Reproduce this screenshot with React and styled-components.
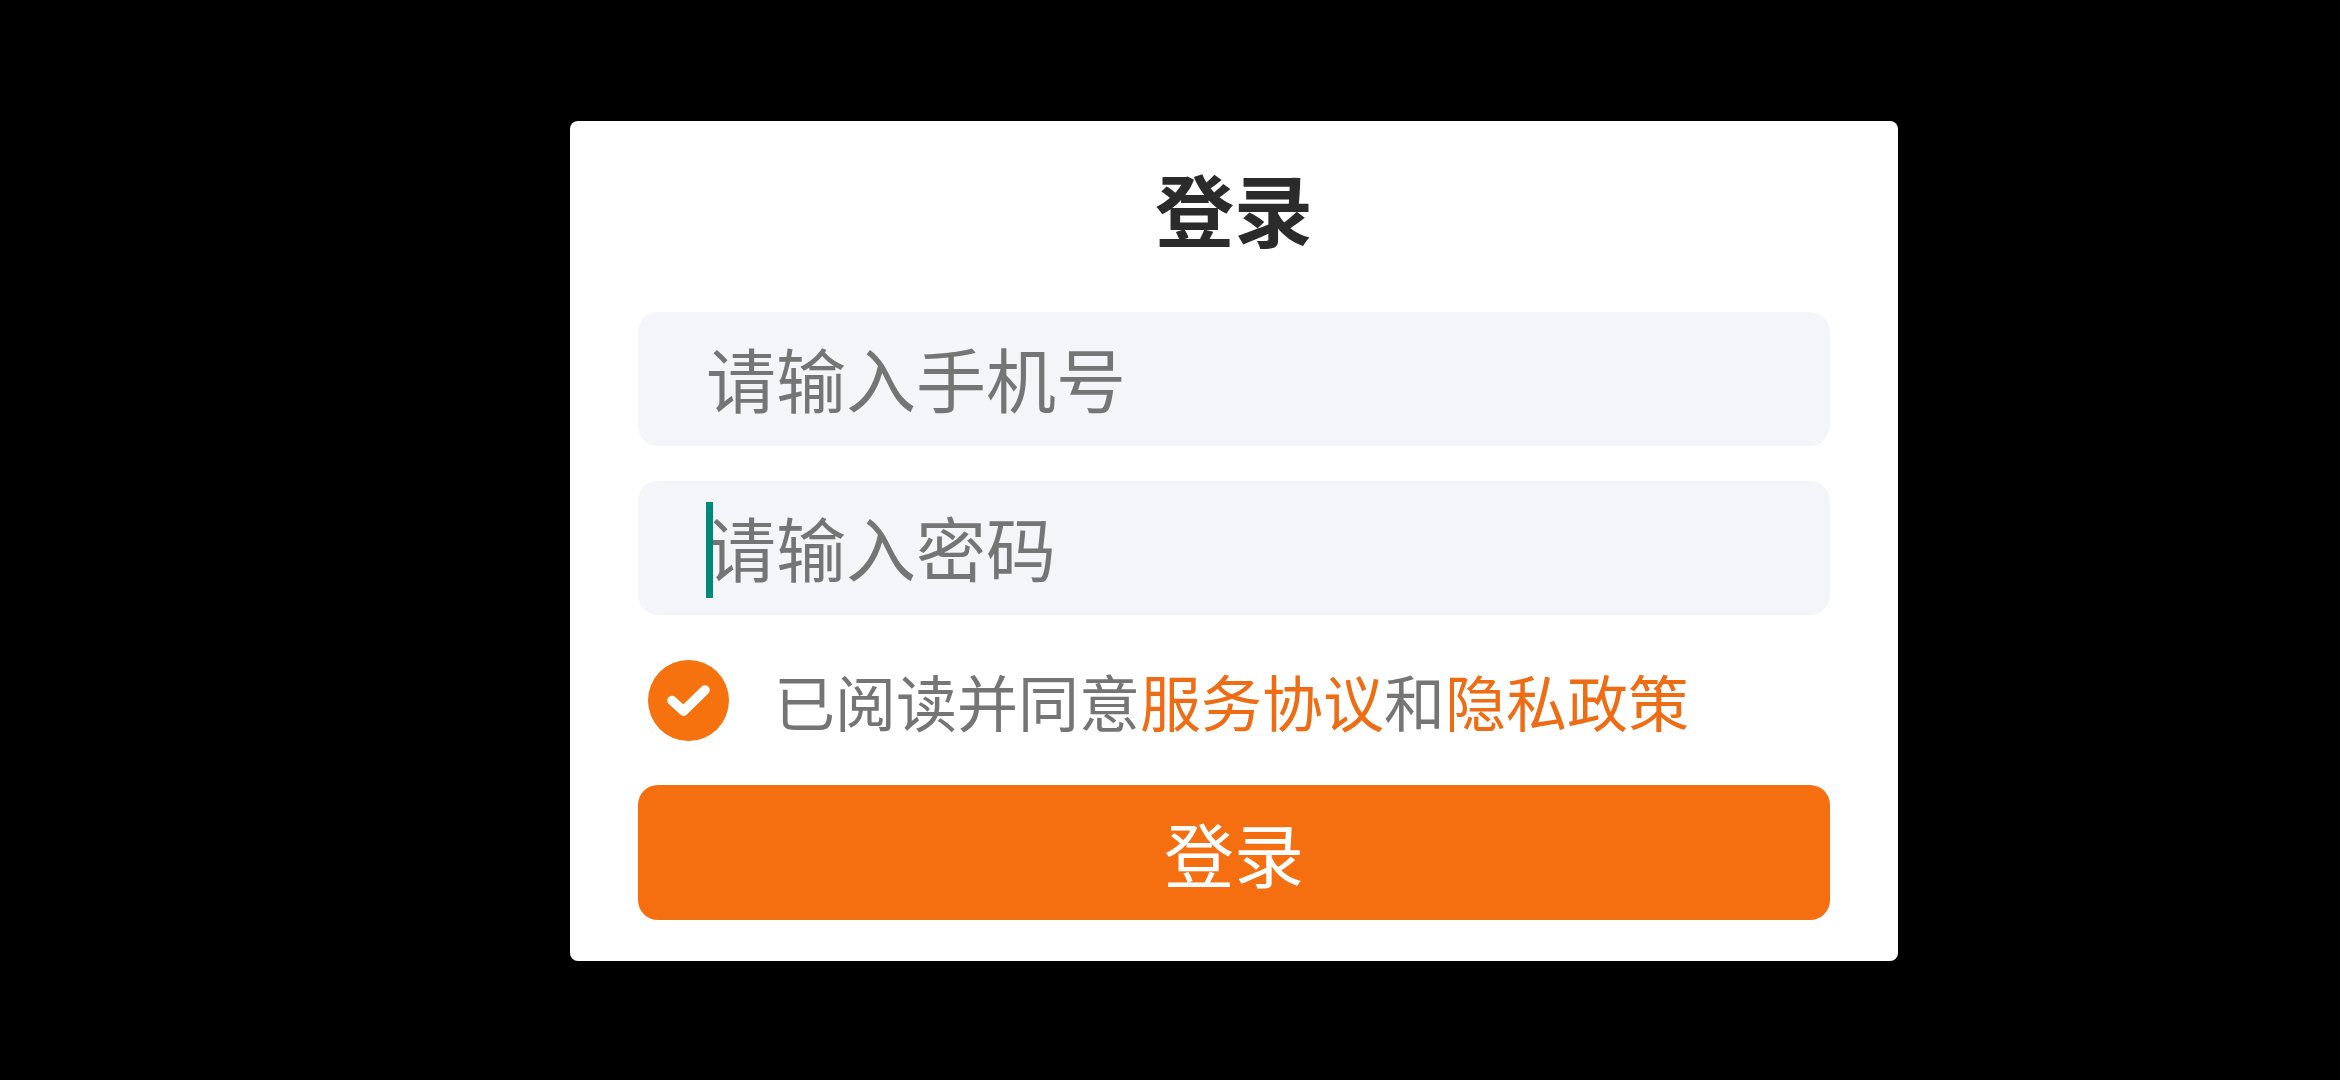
import React from "react";
import styled, { createGlobalStyle } from "styled-components";

const Global = createGlobalStyle`
  html, body { margin: 0; padding: 0; background: #000; }
  body { font-family: "Noto Sans CJK SC", "Noto Sans", sans-serif; }
`;

const Screen = styled.div`
  width: 2340px;
  height: 1080px;
  background: #000;
  display: flex;
  align-items: flex-start;
  justify-content: flex-start;
  padding: 121px 0 0 570px;
  box-sizing: border-box;
  overflow: hidden;
`;

const Card = styled.div`
  width: 1328px;
  height: 840px;
  box-sizing: border-box;
  background: #fff;
  border-radius: 8px;
  padding: 0 68px;
  display: flex;
  flex-direction: column;
`;

const Title = styled.h1`
  margin: 0;
  height: 191px;
  padding-top: 25px;
  box-sizing: border-box;
  font-size: 79px;
  line-height: 124px;
  font-weight: 700;
  color: #2b2b2b;
  text-align: center;
`;

const Field = styled.div`
  position: relative;
  height: 134px;
  margin-bottom: ${(p) => p.$gap}px;
  background: #f4f5f8;
  border-radius: 20px;
  padding: 0 0 3px 68px;
  box-sizing: border-box;
  display: flex;
  align-items: center;
  font-size: 70px;
  color: #757575;
`;

const Caret = styled.span`
  position: absolute;
  left: 68px;
  top: 21px;
  width: 7px;
  height: 96px;
  background: #00897b;
`;

const Agree = styled.div`
  height: 170px;
  display: flex;
  align-items: center;
  padding: 0 0 0 10px;
  font-size: 61px;
  color: #757575;
`;

const Check = styled.span`
  width: 81px;
  height: 81px;
  margin-right: 45px;
  flex: none;
  display: block;
`;

const Link = styled.span`
  color: #ee6c14;
`;

const Submit = styled.button`
  height: 135px;
  border: 0;
  border-radius: 20px;
  background: #f56e0f;
  color: #fff;
  font-family: inherit;
  font-size: 70px;
  padding: 0;
`;

export default function App() {
  return (
    <Screen>
      <Global />
      <Card>
        <Title>登录</Title>
        <Field $gap={35}>请输入手机号</Field>
        <Field $gap={0}>
          <Caret />
          请输入密码
        </Field>
        <Agree>
          <Check>
            <svg width="81" height="81" viewBox="0 0 81 81">
              <circle cx="40.5" cy="40.5" r="40.5" fill="#f5720f" />
              <path d="M24 40.5 L35.5 51 L57 30" fill="none" stroke="#fff" strokeWidth="9.5" strokeLinecap="round" strokeLinejoin="round" />
            </svg>
          </Check>
          <span>
            已阅读并同意<Link>服务协议</Link>和<Link>隐私政策</Link>
          </span>
        </Agree>
        <Submit>登录</Submit>
      </Card>
    </Screen>
  );
}
